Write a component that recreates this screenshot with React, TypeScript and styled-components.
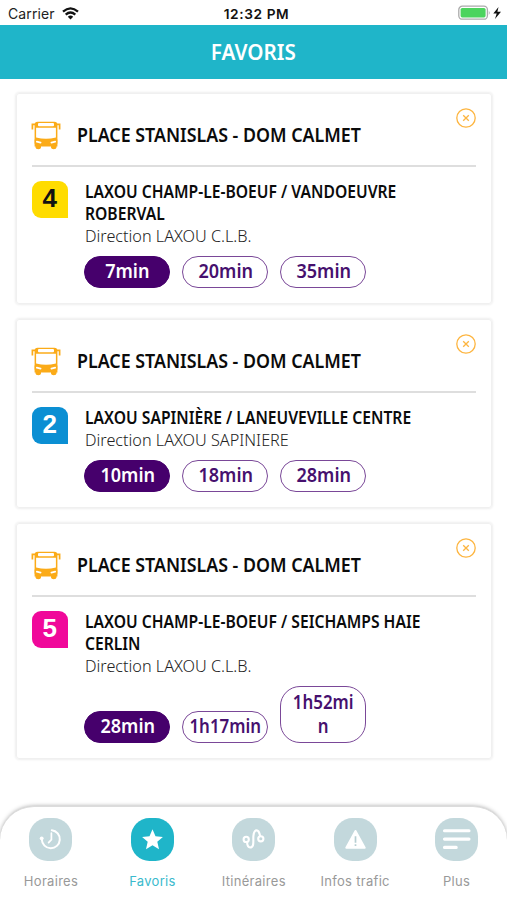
import React from 'react';
import styled, { createGlobalStyle } from 'styled-components';

const GlobalStyle = createGlobalStyle`
  * { box-sizing: border-box; }
  body { margin: 0; background: #fff; }
`;

const brandFont = '"Noto Sans", "Open Sans", sans-serif';
const systemFont = 'Inter, Roboto, sans-serif';

const Screen = styled.div`
  display: flex;
  flex-direction: column;
  width: 507px;
  height: 900px;
  overflow: hidden;
  background: #fff;
  font-family: ${brandFont};
  color: #0b0b0b;
`;

const StatusBar = styled.div`
  display: grid;
  grid-template-columns: 1fr auto 1fr;
  align-items: center;
  flex: none;
  height: 25px;
  padding: 2px 4px 0 8px;
  font: 400 14px/20px ${systemFont};
  color: #222;
`;

const Carrier = styled.div`
  display: flex;
  align-items: center;
  gap: 7px;
  letter-spacing: 0.1px;
`;

const Clock = styled.div`
  padding-left: 2px;
  font-size: 13.7px;
  font-weight: 600;
  letter-spacing: 0.6px;
  color: #111;
`;

const Power = styled.div`
  display: flex;
  justify-content: flex-end;
  align-items: center;
  padding-bottom: 1px;
`;

const Header = styled.header`
  display: flex;
  flex: none;
  align-items: center;
  justify-content: center;
  height: 54px;
  background: #1fb5c9;
  color: #fff;
`;

const HeaderTitle = styled.h1`
  margin: 0;
  font-size: 21.5px;
  font-weight: 600;
  line-height: 30px;
  transform: scaleX(0.96);
`;

const List = styled.main`
  display: flex;
  flex: 1;
  flex-direction: column;
  gap: 15px;
  padding: 14px 15px 0 16px;
`;

const Card = styled.article`
  display: flex;
  flex-direction: column;
  padding: 0 15px 15px 14.5px;
  border: 1px solid #f0f0f0;
  border-radius: 3px;
  box-shadow: 0 0 3px rgba(0, 0, 0, 0.14);
`;

const CardHeader = styled.div`
  display: flex;
  align-items: flex-start;
  height: 73px;
  border-bottom: 2px solid #dedede;
`;

const BusIcon = styled.svg`
  flex: none;
  margin: 27px 15px 0 -0.5px;
`;

const StopName = styled.h2`
  flex: 1;
  margin: 27px 0 0 1px;
  font-size: 19.5px;
  font-weight: 600;
  line-height: 28px;
  white-space: nowrap;
  transform: scaleX(0.914);
  transform-origin: left;
`;

const RemoveButton = styled.button`
  flex: none;
  width: 20px;
  height: 20px;
  margin-top: 14px;
  padding: 0;
  border: 0;
  background: none;
`;

const LineRow = styled.div`
  display: flex;
  gap: 16.5px;
  padding-top: 14px;
`;

const LineBadge = styled.div<{ $color: string; $ink: string }>`
  display: flex;
  flex: none;
  align-items: center;
  justify-content: center;
  width: 36.5px;
  height: 37px;
  margin-top: -0.5px;
  border-radius: 9px 9px 0 9px;
  background: ${(p) => p.$color};
  color: ${(p) => p.$ink};
  font: 700 26px/37px "Liberation Sans", Arial, sans-serif;
  padding-bottom: 1px;
`;

const LineInfo = styled.div`
  flex: 1;
`;

const RouteText = styled.div`
  font-size: 17px;
  font-weight: 600;
  line-height: 22px;
  white-space: pre;
  transform: scaleX(0.92);
  transform-origin: left;
`;

const Direction = styled(RouteText)`
  font-weight: 300;
  color: #222;
  transform: scaleX(0.954);
`;

const Times = styled.div`
  display: flex;
  align-items: flex-end;
  gap: 12px;
  margin: 9px 0 0 -0.25px;
`;

const TimePill = styled.div<{ $active: boolean; $tall: boolean }>`
  display: flex;
  align-items: center;
  justify-content: center;
  width: 86px;
  height: ${(p) => (p.$tall ? 57 : 32)}px;
  border: 1.5px solid ${(p) => (p.$active ? '#46006c' : '#7a4898')};
  border-radius: ${(p) => (p.$tall ? 20 : 16)}px;
  background: ${(p) => (p.$active ? '#46006c' : '#fff')};
  color: ${(p) => (p.$active ? '#fff' : '#46106e')};
`;

const TimeText = styled.span<{ $narrow: boolean }>`
  flex: none;
  padding-bottom: 1px;
  font-size: 19px;
  font-weight: 600;
  line-height: 24.5px;
  text-align: center;
  white-space: pre;
  transform: scaleX(${(p) => (p.$narrow ? 0.89 : 0.95)});
`;

const TabBar = styled.nav`
  display: grid;
  flex: none;
  grid-template-columns: repeat(5, 1fr);
  height: 94px;
  padding-top: 11px;
  border-top: 1px solid #dcdcdc;
  border-radius: 34px 34px 0 0;
  box-shadow: 0 0 4px rgba(0, 0, 0, 0.34);
  background: #fff;
`;

const Tab = styled.div<{ $active: boolean }>`
  display: flex;
  flex-direction: column;
  align-items: center;
  gap: 10.5px;
  padding-left: 0.6px;
  font: 400 13px/18px ${systemFont};
  letter-spacing: 0.3px;
  color: ${(p) => (p.$active ? '#3abacd' : '#999')};
`;

const TabIcon = styled.div<{ $active: boolean }>`
  width: 43px;
  height: 43px;
  border-radius: 18.5px;
  background: ${(p) => (p.$active ? '#1fb5c9' : '#c3d8dc')};
`;

function Bus() {
  return (
    <BusIcon width="30" height="29" viewBox="0 0 30 29">
      <rect x="3.6" y="0.8" width="22.8" height="24" rx="3" fill="#fbab18" />
      <rect x="7" y="2" width="16" height="3.2" rx="1" fill="#fff" />
      <path d="M5.1 6.8h19.8v9.6q-9.9 2.6-19.8 0z" fill="#fff" />
      <path d="M4 3.4H1.4V8.6M26 3.4h2.6V8.6" fill="none" stroke="#fbab18" strokeWidth="1.7" />
      <path d="M3.6 18.5h22.8v7H3.6z" fill="#fbab18" />
      <path d="M4.5 25h5.5v1.6q0 1.6-2.7 1.6T4.5 26.6zM20 25h5.5v1.6q0 1.6-2.7 1.6T20 26.6z" fill="#fbab18" />
      <path d="M5.8 20.6l3.8 1M24.2 20.6l-3.8 1" stroke="#fff" strokeWidth="1.7" strokeLinecap="round" />
    </BusIcon>
  );
}

const tabGlyphs: Record<string, React.ReactNode> = {
  Horaires: (
    <g fill="none" stroke="#fff" strokeWidth="2" strokeLinecap="round">
      <path d="M22.8 12.3a9 9 0 1 1-10 9.2" />
      <path d="M22.4 15.2v6.5l-2.8 3" strokeWidth="1.7" />
      <circle cx="12.7" cy="20.3" r="1.9" fill="#fff" stroke="none" />
    </g>
  ),
  Favoris: (
    <path
      d="M21.5 11.3l3 7 7.4.6-5.6 4.9 1.7 7.4-6.5-4-6.5 4 1.7-7.4-5.6-4.9 7.4-.6z"
      fill="#fff"
    />
  ),
  'Itinéraires': (
    <g fill="none" stroke="#fff" strokeWidth="2.1">
      <circle cx="14.2" cy="21.4" r="2.6" />
      <circle cx="28.8" cy="20.8" r="2.6" />
      <path d="M15 24.2c.3 3.2 1 5.3 3 5.3 4.6 0 3-6.5 3.4-11.5.3-3.8 1.4-5.6 3.2-5.6s2.8 1.9 3.5 5.6" />
    </g>
  ),
  'Infos trafic': (
    <g>
      <path d="M21.5 13L30.7 29.8H12.3z" fill="#fff" stroke="#fff" strokeWidth="2" strokeLinejoin="round" />
      <path d="M21.5 18.3v6.4M21.5 26.3v1.8" stroke="#b6ced2" strokeWidth="1.7" />
    </g>
  ),
  Plus: (
    <path d="M9.5 12.7h24.5M9.5 21.1h24.5M9.5 29.4h11.7" stroke="#fff" strokeWidth="3.1" strokeLinecap="round" />
  ),
};

const favourites = [
  {
    line: '4', color: '#ffdc00', ink: '#111',
    route: 'LAXOU CHAMP-LE-BOEUF / VANDOEUVRE\nROBERVAL',
    direction: 'Direction LAXOU C.L.B.',
    times: ['7min', '20min', '35min'],
  },
  {
    line: '2', color: '#0b8fd3', ink: '#fff',
    route: 'LAXOU SAPINIÈRE / LANEUVEVILLE CENTRE',
    direction: 'Direction LAXOU SAPINIERE',
    times: ['10min', '18min', '28min'],
  },
  {
    line: '5', color: '#f0089a', ink: '#fff',
    route: 'LAXOU CHAMP-LE-BOEUF / SEICHAMPS HAIE\nCERLIN',
    direction: 'Direction LAXOU C.L.B.',
    times: ['28min', '1h17min', '1h52mi\nn'],
  },
];

export default function App() {
  return (
    <Screen>
      <GlobalStyle />
      <StatusBar>
        <Carrier>
          Carrier
          <svg width="17" height="13" viewBox="0 0 17 13" fill="none" stroke="#111" strokeWidth="2.3">
            <path d="M1 4.6Q8.5-1.8 16 4.6M3.7 7.6Q8.5 3.4 13.3 7.6" />
            <path d="M5.8 9.7Q8.5 7.4 11.2 9.7L8.5 12.5z" fill="#111" stroke="none" />
          </svg>
        </Carrier>
        <Clock>12:32 PM</Clock>
        <Power>
          <svg width="45" height="16" viewBox="0 0 45 16">
            <rect x="0.8" y="1.2" width="28.6" height="13" rx="3.5" fill="#fff" stroke="#aaa" strokeWidth="1.3" />
            <rect x="2.6" y="3" width="25" height="9.4" rx="1.6" fill="#4cd45e" />
            <path d="M30.8 5.5q1.8 2.2 0 4.4z" fill="#aaa" />
            <path d="M40.5 2L35.3 8.5h3.4L37 14l6-7.3h-3.6z" fill="#111" />
          </svg>
        </Power>
      </StatusBar>
      <Header>
        <HeaderTitle>FAVORIS</HeaderTitle>
      </Header>
      <List>
        {favourites.map((f) => (
          <Card key={f.line}>
            <CardHeader>
              <Bus />
              <StopName>PLACE STANISLAS - DOM CALMET</StopName>
              <RemoveButton aria-label="Supprimer">
                <svg width="20" height="20" viewBox="0 0 20 20" fill="none" stroke="#fdb540" strokeWidth="1.3">
                  <circle cx="10" cy="10" r="9.2" />
                  <path d="M7.2 7.2l5.6 5.6M12.8 7.2l-5.6 5.6" />
                </svg>
              </RemoveButton>
            </CardHeader>
            <LineRow>
              <LineBadge $color={f.color} $ink={f.ink}>{f.line}</LineBadge>
              <LineInfo>
                <RouteText>{f.route}</RouteText>
                <Direction>{f.direction}</Direction>
                <Times>
                  {f.times.map((t, i) => (
                    <TimePill key={t} $active={i === 0} $tall={t.includes('\n')}>
                      <TimeText $narrow={t.includes('h')}>{t}</TimeText>
                    </TimePill>
                  ))}
                </Times>
              </LineInfo>
            </LineRow>
          </Card>
        ))}
      </List>
      <TabBar>
        {Object.keys(tabGlyphs).map((name) => (
          <Tab key={name} $active={name === 'Favoris'}>
            <TabIcon $active={name === 'Favoris'}>
              <svg width="43" height="43" viewBox="0 0 43 43">{tabGlyphs[name]}</svg>
            </TabIcon>
            {name}
          </Tab>
        ))}
      </TabBar>
    </Screen>
  );
}
